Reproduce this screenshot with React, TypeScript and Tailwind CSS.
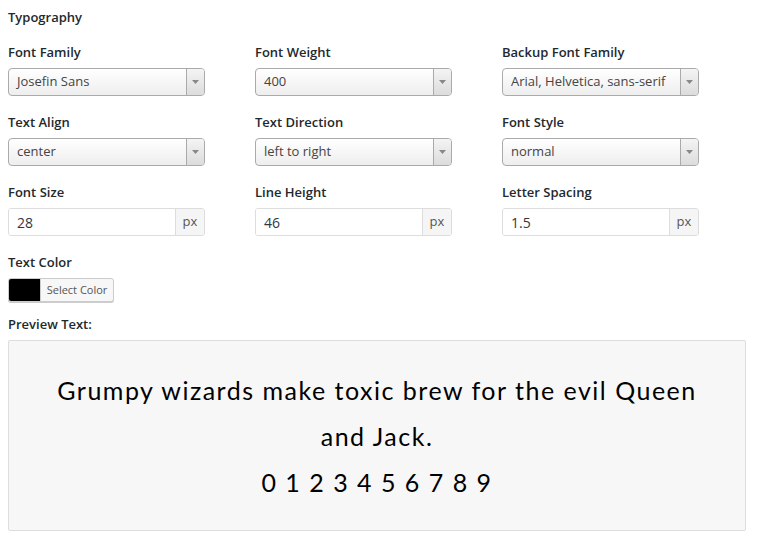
import React from "react";

const FONT = { fontFamily: '"Open Sans", "Liberation Sans", sans-serif' };

function Label({ children }: { children: React.ReactNode }) {
  return <div className="text-[13px] font-semibold text-[#23282d] leading-[18px] mb-[7px]">{children}</div>;
}

function Select({ value }: { value: string }) {
  return (
    <div className="flex h-[28px] w-[197px] rounded-[4px] border border-[#aaa] bg-gradient-to-b from-white to-[#eee] overflow-hidden">
      <div className="flex-1 flex items-center pl-[8px] text-[13px] text-[#444] whitespace-nowrap">{value}</div>
      <div className="w-[18px] flex items-center justify-center border-l border-[#aaa] bg-gradient-to-b from-[#f4f4f4] to-[#dcdcdc]">
        <svg width="7" height="4" viewBox="0 0 7 4">
          <path d="M0 0h7L3.5 4z" fill="#888" />
        </svg>
      </div>
    </div>
  );
}

function PxInput({ value }: { value: string }) {
  return (
    <div className="flex h-[28px] w-[197px] rounded-[3px] border border-[#ddd] overflow-hidden shadow-[inset_0_1px_2px_rgba(0,0,0,0.04)]">
      <div className="flex-1 flex items-center pl-[8px] text-[14px] text-[#32373c] bg-white">{value}</div>
      <div className="w-[29px] flex items-center justify-center border-l border-[#ddd] bg-[#f5f5f5] text-[13px] text-[#555]">px</div>
    </div>
  );
}

function Field({ label, children }: { label: string; children: React.ReactNode }) {
  return (
    <div className="w-[197px]">
      <Label>{label}</Label>
      {children}
    </div>
  );
}

export default function App() {
  return (
    <div className="w-[758px] h-[543px] bg-white px-[8px] pt-[8px] overflow-hidden" style={FONT}>
      <div className="text-[13px] font-semibold text-[#23282d] leading-[18px] mb-[17px]">Typography</div>

      <div className="grid grid-cols-[197px_197px_197px] gap-x-[50px] gap-y-[17px]">
        <Field label="Font Family"><Select value="Josefin Sans" /></Field>
        <Field label="Font Weight"><Select value="400" /></Field>
        <Field label="Backup Font Family"><Select value="Arial, Helvetica, sans-serif" /></Field>

        <Field label="Text Align"><Select value="center" /></Field>
        <Field label="Text Direction"><Select value="left to right" /></Field>
        <Field label="Font Style"><Select value="normal" /></Field>

        <Field label="Font Size"><PxInput value="28" /></Field>
        <Field label="Line Height"><PxInput value="46" /></Field>
        <Field label="Letter Spacing"><PxInput value="1.5" /></Field>

        <Field label="Text Color">
          <div className="flex h-[24px] w-[106px] rounded-[3px] border border-[#ccc] overflow-hidden bg-[#f7f7f7] shadow-[0_1px_0_#ccc]">
            <div className="w-[31px] bg-black" />
            <div className="flex-1 flex items-center justify-center text-[11px] text-[#555] border-l border-[#ccc]">Select Color</div>
          </div>
        </Field>
      </div>

      <div className="mt-[13px]">
        <Label>Preview Text:</Label>
        <div className="mt-[6px] w-[738px] h-[191px] border border-[#ddd] rounded-[2px] bg-[#f7f7f7] px-[44px] pt-[26px]">
          <div
            className="text-center text-black text-[25px] leading-[46px] tracking-[1.5px] font-normal"
            style={{ fontFamily: '"Lato", "Open Sans", sans-serif' }}
          >
            Grumpy wizards make toxic brew for the evil Queen and Jack.
            <br />0 1 2 3 4 5 6 7 8 9
          </div>
        </div>
      </div>
    </div>
  );
}
